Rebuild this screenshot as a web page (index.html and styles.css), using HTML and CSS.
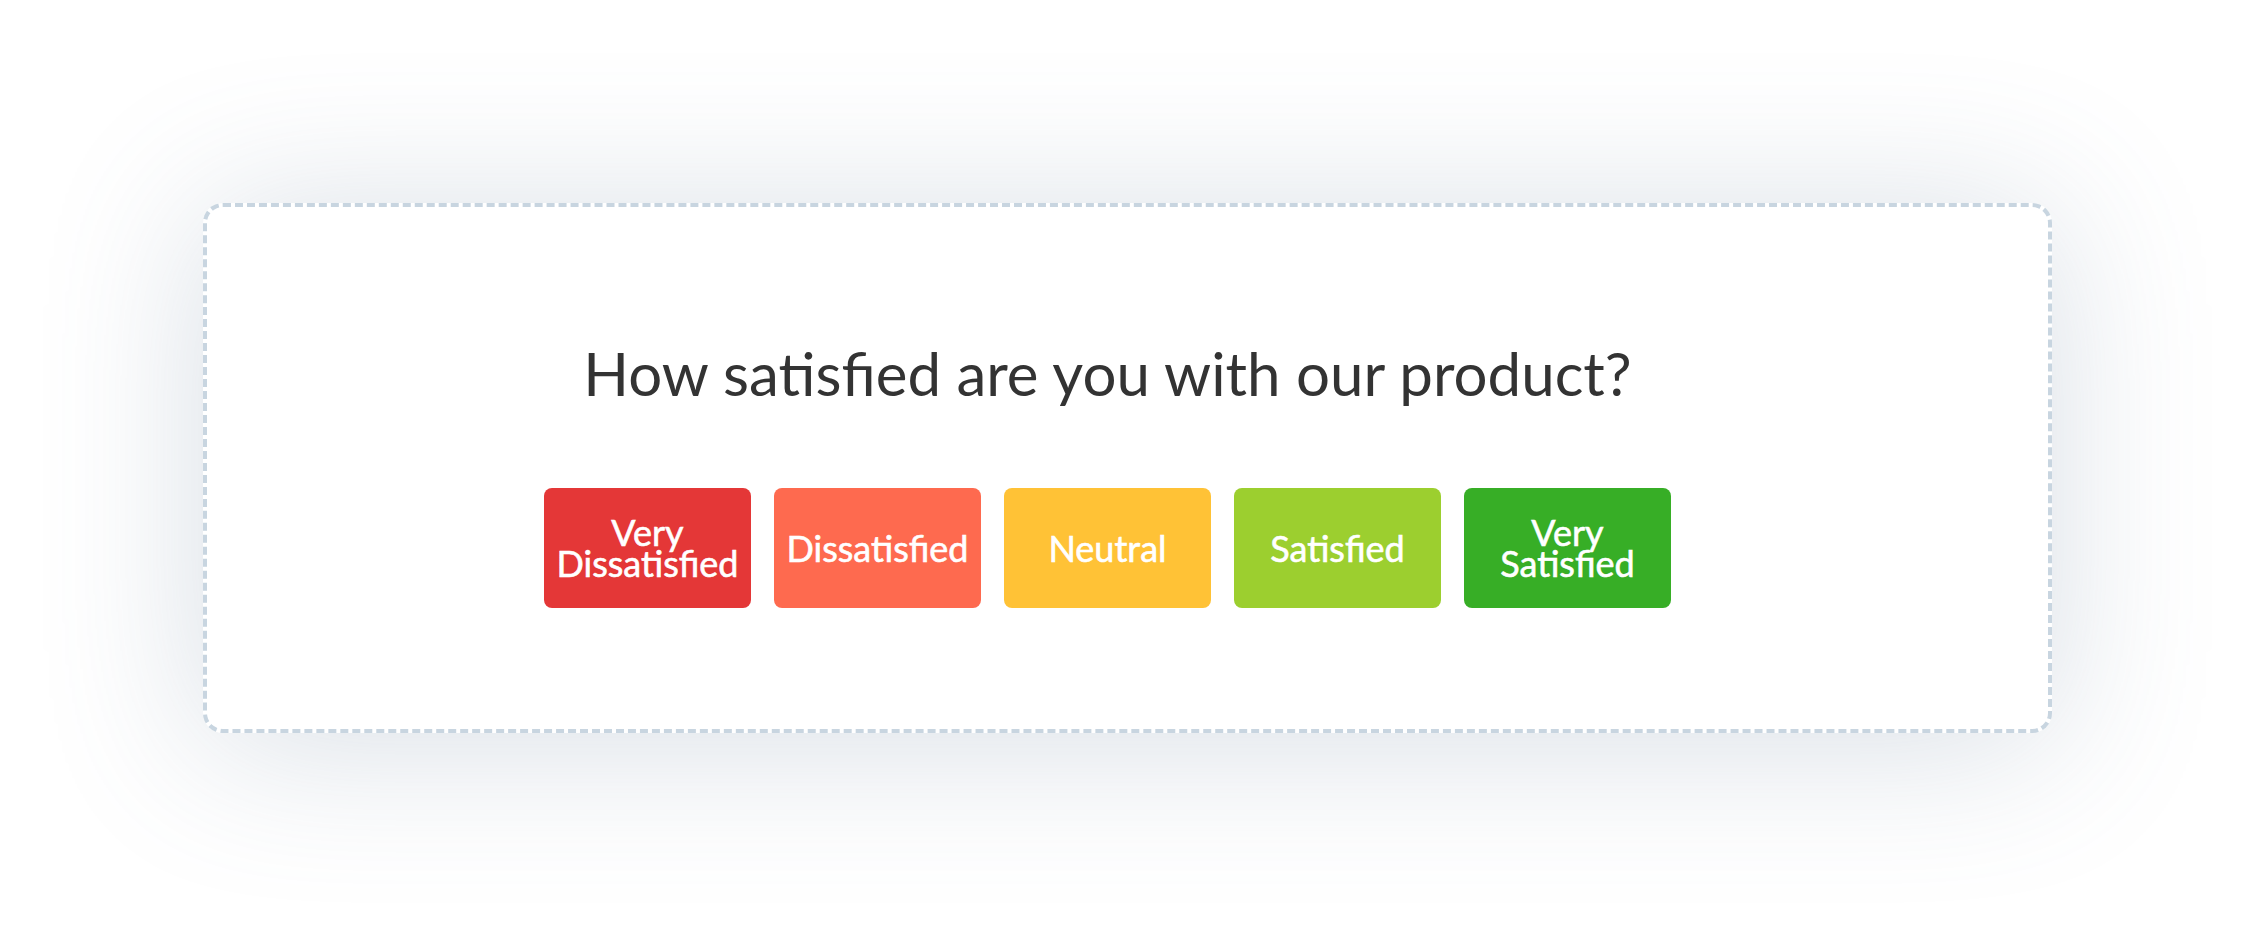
FILE: index.html
```html
<!DOCTYPE html>
<html lang="en">
    <head>
        <meta charset="UTF-8">
        <meta name="viewport" content="width=device-width, initial-scale=1.0">
        <title>Product Survey</title>
        <link rel="stylesheet" href="styles.css">
    </head>
    <body>
        <main class="survey-card">
            <h1 class="survey-question">How satisfied are you with our product?</h1>
            <div class="rating-row">
                <button class="rating rating-very-bad">Very<br>Dissatisfied</button>
                <button class="rating rating-bad">Dissatisfied</button>
                <button class="rating rating-neutral">Neutral</button>
                <button class="rating rating-good">Satisfied</button>
                <button class="rating rating-very-good">Very<br>Satisfied</button>
            </div>
        </main>
    </body>
</html>
```

FILE: styles.css
```css
html, body {
    margin: 0;
    height: 100%;
}
body {
    box-sizing: border-box;
    padding: 5px 0 0 4px;
    background-color: #ffffff;
    display: flex;
    justify-content: center;
    align-items: center;
    font-family: Lato, "Liberation Sans", sans-serif;
}
.survey-card {
    box-sizing: border-box;
    width: 1849px;
    height: 530px;
    padding: 130px 40px 0 0; /* question sits a little left of centre */
    background-color: #ffffff;
    border: 4px dashed #c8d5e0;
    border-radius: 20px;
    box-shadow: 0 10px 160px rgba(90, 115, 145, 0.24);
    display: flex;
    flex-direction: column;
    align-items: center;
}
.survey-question {
    margin: 0;
    font-size: 60px;
    font-weight: 400;
    line-height: 72px;
    color: #333333;
}
.rating-row {
    display: flex;
    gap: 23px;
    margin-top: 79px;
}
.rating {
    width: 207px;
    height: 120px;
    padding: 0;
    border: none;
    border-radius: 8px;
    color: #ffffff;
    font-family: Lato, "Liberation Sans", sans-serif;
    font-size: 36px;
    font-weight: 400;
    line-height: 31px;
    -webkit-text-stroke: 0.6px #ffffff;
    cursor: pointer;
}
.rating-very-bad {
    background-color: #e43737;
}
.rating-bad {
    background-color: #fe6a4f;
}
.rating-neutral {
    background-color: #ffc236;
}
.rating-good {
    background-color: #9ccf2f;
}
.rating-very-good {
    background-color: #37ae26;
}
```
